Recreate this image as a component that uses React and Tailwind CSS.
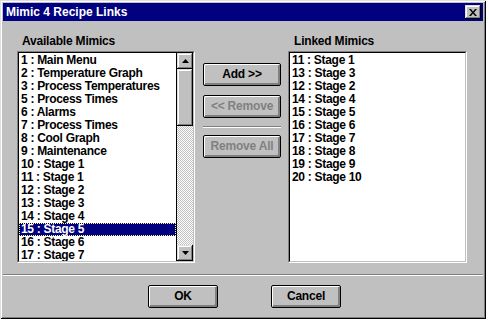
import React from "react";

const LEFT = [
  "1 : Main Menu",
  "2 : Temperature Graph",
  "3 : Process Temperatures",
  "5 : Process Times",
  "6 : Alarms",
  "7 : Process Times",
  "8 : Cool Graph",
  "9 : Maintenance",
  "10 : Stage 1",
  "11 : Stage 1",
  "12 : Stage 2",
  "13 : Stage 3",
  "14 : Stage 4",
  "15 : Stage 5",
  "16 : Stage 6",
  "17 : Stage 7",
];

const RIGHT = [
  "11 : Stage 1",
  "13 : Stage 3",
  "12 : Stage 2",
  "14 : Stage 4",
  "15 : Stage 5",
  "16 : Stage 6",
  "17 : Stage 7",
  "18 : Stage 8",
  "19 : Stage 9",
  "20 : Stage 10",
];

const raised =
  "shadow-[inset_-1px_-1px_#000,inset_1px_1px_#dfdfdf,inset_-2px_-2px_#808080,inset_2px_2px_#fff]";

function Btn({ children, disabled, className = "" }) {
  return (
    <div
      className={
        "h-[23px] border border-black rounded-[2px] bg-[#c0c0c0] shadow-[inset_1px_1px_#fff,inset_-1px_-1px_#808080,inset_-2px_-2px_#808080] flex items-center justify-center text-[12px] leading-[13px] font-bold tracking-[-0.2px] " +
        (disabled ? "text-[#808080] " : "text-black ") +
        className
      }
    >
      {children}
    </div>
  );
}

function Arrow({ down }) {
  return (
    <svg width="7" height="4" viewBox="0 0 7 4">
      {down ? (
        <polygon points="0,0 7,0 3.5,4" fill="#000" />
      ) : (
        <polygon points="0,4 7,4 3.5,0" fill="#000" />
      )}
    </svg>
  );
}

function ListBox({ items, selected, scroll, width }) {
  return (
    <div
      className={
        "h-[212px] border border-t-[#808080] border-l-[#808080] border-r-white border-b-white " +
        width
      }
    >
      <div className="h-full border border-t-black border-l-black border-r-[#c0c0c0] border-b-[#c0c0c0] bg-white flex overflow-hidden">
        <div className="flex-1 flex flex-col overflow-hidden pt-[1px]">
          {items.map((t, i) => (
            <div
              key={i}
              className={
                "h-[13px] shrink-0 leading-[13px] pl-[2px] whitespace-nowrap text-[12px] font-bold tracking-[-0.3px] " +
                (i === selected
                  ? "bg-[#000080] text-white outline outline-1 outline-dotted outline-[#ffff80] -outline-offset-1"
                  : "text-black")
              }
            >
              {t}
            </div>
          ))}
        </div>
        {scroll && (
          <div className="w-[17px] border-l border-black flex flex-col">
            <div className={"h-[16px] bg-[#c0c0c0] flex items-center justify-center " + raised}>
              <Arrow />
            </div>
            <div className={"h-[57px] bg-[#c0c0c0] " + raised} />
            <div className="flex-1 bg-[repeating-conic-gradient(#c0c0c0_0%_25%,#ffffff_0%_50%)] bg-[length:2px_2px]" />
            <div className={"h-[16px] bg-[#c0c0c0] flex items-center justify-center " + raised}>
              <Arrow down />
            </div>
          </div>
        )}
      </div>
    </div>
  );
}

export default function App() {
  return (
    <div
      className="w-[489px] h-[322px] bg-white"
      style={{ fontFamily: '"Liberation Sans", Arial, sans-serif' }}
    >
      <div className="w-[486px] h-[319px] bg-[#c0c0c0] p-[3px] flex flex-col shadow-[inset_1px_1px_#dfdfdf,inset_-1px_-1px_#000,inset_2px_2px_#fff,inset_-2px_-2px_#808080]">
        {/* Title bar */}
        <div className="h-[18px] bg-[#000080] flex items-center justify-between pl-[3px] pr-[2px]">
          <span className="text-white text-[12px] font-bold leading-[13px]">
            Mimic 4 Recipe Links
          </span>
          <div className={"w-[16px] h-[14px] bg-[#c0c0c0] flex items-center justify-center " + raised}>
            <svg width="8" height="7" viewBox="0 0 8 7">
              <path d="M0 0h2l2 2.5L6 0h2L5 3.5 8 7H6L4 4.5 2 7H0l3-3.5z" fill="#000" />
            </svg>
          </div>
        </div>

        {/* Main area */}
        <div className="flex pl-[14px] pt-[14px]">
          <div className="w-[178px] flex flex-col">
            <div className="h-[13px] leading-[13px] pl-[5px] text-[12px] font-bold tracking-[-0.2px] text-black">
              Available Mimics
            </div>
            <div className="mt-[3px]">
              <ListBox items={LEFT} selected={13} scroll width="w-[178px]" />
            </div>
          </div>

          <div className="ml-[8px] w-[78px] pt-[28px] flex flex-col">
            <Btn>Add &gt;&gt;</Btn>
            <Btn disabled className="mt-[9px]">
              &lt;&lt; Remove
            </Btn>
            <div className="mt-[8px] h-[2px] border-t border-[#808080] border-b border-b-white" />
            <Btn disabled className="mt-[7px]">
              Remove All
            </Btn>
          </div>

          <div className="ml-[7px] w-[179px] flex flex-col">
            <div className="h-[13px] leading-[13px] pl-[6px] text-[12px] font-bold tracking-[-0.2px] text-black">
              Linked Mimics
            </div>
            <div className="mt-[3px]">
              <ListBox items={RIGHT} selected={-1} width="w-[179px]" />
            </div>
          </div>
        </div>

        {/* Separator */}
        <div className="mt-[11px] h-[2px] border-t border-[#808080] border-b border-b-white" />

        {/* Bottom buttons */}
        <div className="mt-[9px] flex pl-[145px]">
          <Btn className="w-[70px]">OK</Btn>
          <Btn className="w-[70px] ml-[53px]">Cancel</Btn>
        </div>
      </div>
    </div>
  );
}
